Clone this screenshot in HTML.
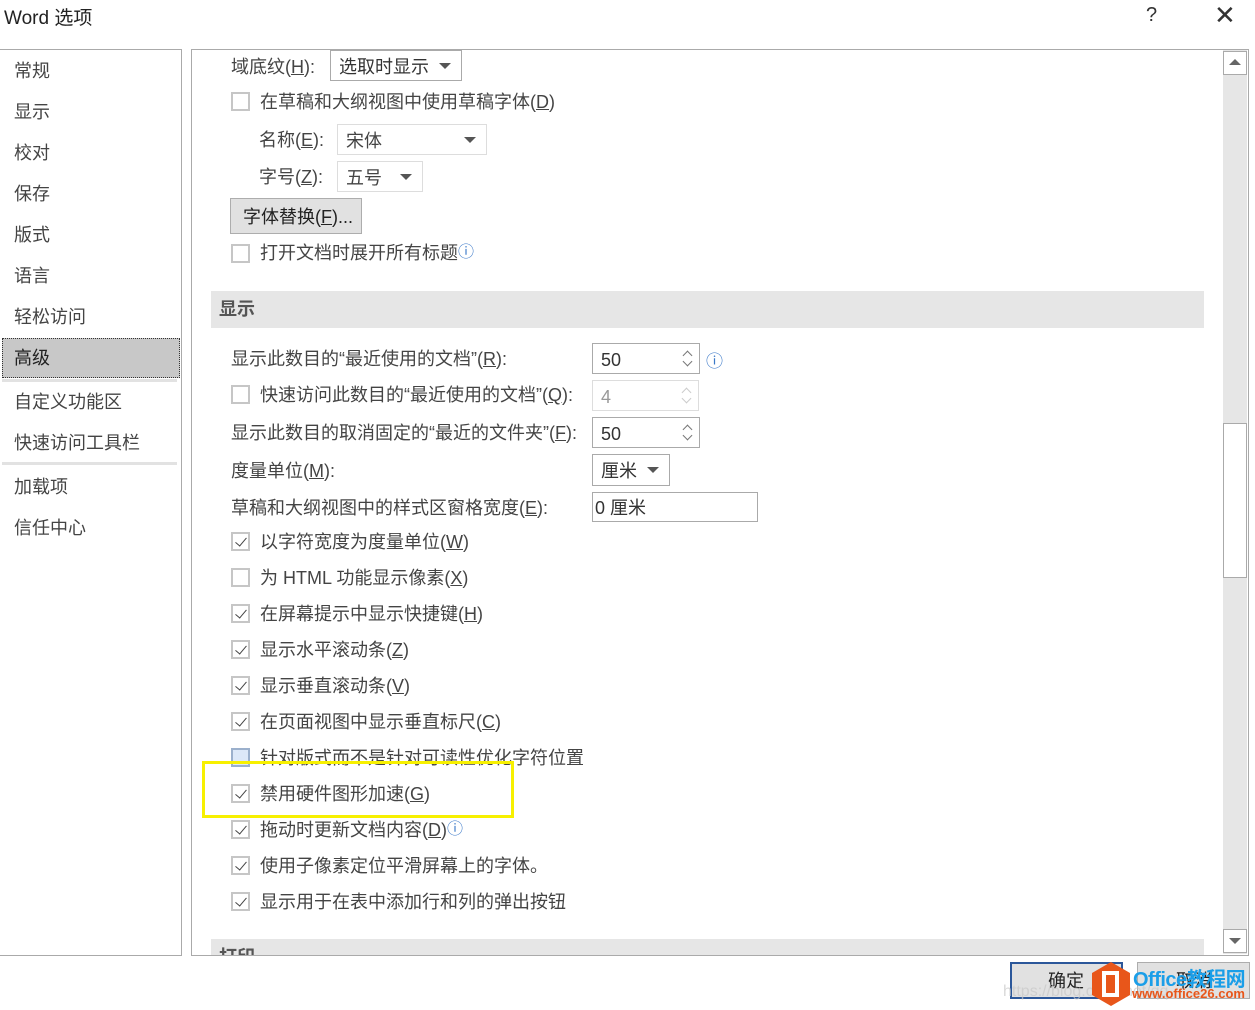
<!DOCTYPE html>
<html><head><meta charset="utf-8"><style>
*{margin:0;padding:0;box-sizing:border-box}
body{width:1255px;height:1010px;background:#fff;position:relative;overflow:hidden;font-family:"Liberation Sans","Microsoft YaHei","Noto Sans CJK SC",sans-serif;color:#444;font-size:18px}
.a{position:absolute;white-space:nowrap}
.t{line-height:24px;margin-top:1px}
.cb{position:absolute;width:19px;height:19px;border:2px solid #c6c6c6;background:#fff}
.cb.k::after{content:"";position:absolute;left:5px;top:1px;width:5px;height:10px;border:solid #444;border-width:0 1.5px 1.5px 0;transform:rotate(40deg)}
.box{position:absolute;border:1px solid #aaa;background:#fff}
.dd::after{content:"";position:absolute;right:10px;top:50%;margin-top:-3px;border:6px solid transparent;border-top:6px solid #555;border-bottom:0}
.up,.dn{position:absolute;right:8px;width:7px;height:7px;border:solid #777;border-width:1px 0 0 1px}
.up{top:8px;transform:rotate(45deg)}
.dn{top:14px;transform:rotate(225deg)}
.g .up,.g .dn{border-color:#ccc}
u{text-decoration:underline}
</style></head><body>
<div class="a" style="left:4px;top:3px;font-size:19px;color:#222">Word 选项</div>
<div class="a" style="left:1146px;top:4px;font-size:20px;color:#333">?</div>
<div class="a" style="left:1214px;top:0px;font-size:26px;color:#333;font-weight:300">✕</div>

<div class="a" style="left:0;top:49px;width:182px;height:907px;border:1px solid #aaa;border-left:none"></div>
<div class="a" style="left:2px;top:338px;width:178px;height:40px;background:#c8c8c8;border:1px dotted #333"></div>
<div class="a" style="left:2px;top:379px;width:175px;height:3px;background:#e2e2e2"></div>
<div class="a" style="left:2px;top:462px;width:175px;height:3px;background:#e2e2e2"></div>
<div class="a t" style="left:14px;top:58px">常规</div>
<div class="a t" style="left:14px;top:99px">显示</div>
<div class="a t" style="left:14px;top:140px">校对</div>
<div class="a t" style="left:14px;top:181px">保存</div>
<div class="a t" style="left:14px;top:222px">版式</div>
<div class="a t" style="left:14px;top:263px">语言</div>
<div class="a t" style="left:14px;top:304px">轻松访问</div>
<div class="a t" style="left:14px;top:345px;color:#222">高级</div>
<div class="a t" style="left:14px;top:389px">自定义功能区</div>
<div class="a t" style="left:14px;top:430px">快速访问工具栏</div>
<div class="a t" style="left:14px;top:474px">加载项</div>
<div class="a t" style="left:14px;top:515px">信任中心</div>

<div class="a" style="left:191px;top:49px;width:1058px;height:907px;border:1px solid #aaa"></div>
<div class="a" style="left:1223px;top:50px;width:24px;height:904px;background:#e6e6e6"></div>
<div class="a" style="left:1223px;top:51px;width:24px;height:24px;background:#fff;border:1px solid #aaa"></div>
<div class="a" style="left:1229px;top:59px;border:6px solid transparent;border-bottom:6px solid #666;border-top:0"></div>
<div class="a" style="left:1223px;top:423px;width:24px;height:155px;background:#fff;border:1px solid #aaa"></div>
<div class="a" style="left:1223px;top:929px;width:24px;height:24px;background:#fff;border:1px solid #aaa"></div>
<div class="a" style="left:1229px;top:938px;border:6px solid transparent;border-top:6px solid #666;border-bottom:0"></div>

<div class="a t" style="left:231px;top:54px">域底纹(<u>H</u>):</div>
<div class="box dd" style="left:330px;top:50px;width:132px;height:31px"><span class="a t" style="left:8px;top:3px;color:#333">选取时显示</span></div>
<div class="cb" style="left:231px;top:92px"></div><div class="a t" style="left:260px;top:89px">在草稿和大纲视图中使用草稿字体(<u>D</u>)</div>
<div class="a t" style="left:259px;top:127px">名称(<u>E</u>):</div>
<div class="box dd" style="left:337px;top:124px;width:150px;height:31px;border-color:#ddd"><span class="a t" style="left:8px;top:3px">宋体</span></div>
<div class="a t" style="left:259px;top:164px">字号(<u>Z</u>):</div>
<div class="box dd" style="left:337px;top:161px;width:86px;height:31px;border-color:#ddd"><span class="a t" style="left:8px;top:3px">五号</span></div>
<div class="a" style="left:230px;top:198px;width:132px;height:36px;background:#e1e1e1;border:1px solid #adadad"></div>
<div class="a t" style="left:243px;top:204px;color:#222">字体替换(<u>F</u>)...</div>
<div class="cb" style="left:231px;top:244px"></div><div class="a t" style="left:260px;top:240px">打开文档时展开所有标题<span style="color:#3a78c8;font-size:16px;vertical-align:top">ⓘ</span></div>

<div class="a" style="left:211px;top:291px;width:993px;height:37px;background:#e6e6e6"></div>
<div class="a t" style="left:219px;top:296px;font-weight:bold;color:#555">显示</div>

<div class="a t" style="left:231px;top:346px">显示此数目的“最近使用的文档”(<u>R</u>):</div>
<div class="box" style="left:592px;top:343px;width:108px;height:31px"><span class="a t" style="left:8px;top:3px;color:#333">50</span><i class="up"></i><i class="dn"></i></div>
<div class="a" style="left:706px;top:347px;color:#3a78c8;font-size:17px">ⓘ</div>
<div class="cb" style="left:231px;top:385px"></div><div class="a t" style="left:260px;top:382px">快速访问此数目的“最近使用的文档”(<u>Q</u>):</div>
<div class="box g" style="left:592px;top:380px;width:107px;height:31px;border-color:#ddd"><span class="a t" style="left:8px;top:3px;color:#999">4</span><i class="up"></i><i class="dn"></i></div>
<div class="a t" style="left:231px;top:420px">显示此数目的取消固定的“最近的文件夹”(<u>F</u>):</div>
<div class="box" style="left:592px;top:417px;width:108px;height:31px"><span class="a t" style="left:8px;top:3px;color:#333">50</span><i class="up"></i><i class="dn"></i></div>
<div class="a t" style="left:231px;top:458px">度量单位(<u>M</u>):</div>
<div class="box dd" style="left:592px;top:454px;width:78px;height:32px"><span class="a t" style="left:8px;top:3px;color:#333">厘米</span></div>
<div class="a t" style="left:231px;top:495px">草稿和大纲视图中的样式区窗格宽度(<u>E</u>):</div>
<div class="box" style="left:592px;top:492px;width:166px;height:30px"><span class="a t" style="left:2px;top:2px;color:#333">0 厘米</span></div>

<div class="cb k" style="left:231px;top:532px"></div><div class="a t" style="left:260px;top:529px">以字符宽度为度量单位(<u>W</u>)</div>
<div class="cb" style="left:231px;top:568px"></div><div class="a t" style="left:260px;top:565px">为 HTML 功能显示像素(<u>X</u>)</div>
<div class="cb k" style="left:231px;top:604px"></div><div class="a t" style="left:260px;top:601px">在屏幕提示中显示快捷键(<u>H</u>)</div>
<div class="cb k" style="left:231px;top:640px"></div><div class="a t" style="left:260px;top:637px">显示水平滚动条(<u>Z</u>)</div>
<div class="cb k" style="left:231px;top:676px"></div><div class="a t" style="left:260px;top:673px">显示垂直滚动条(<u>V</u>)</div>
<div class="cb k" style="left:231px;top:712px"></div><div class="a t" style="left:260px;top:709px">在页面视图中显示垂直标尺(<u>C</u>)</div>
<div class="cb" style="left:231px;top:748px;background:#dce8f8;border-color:#9bb0cc"></div><div class="a t" style="left:260px;top:745px">针对版式而不是针对可读性优化字符位置</div>
<div class="cb k" style="left:231px;top:784px"></div><div class="a t" style="left:260px;top:781px">禁用硬件图形加速(<u>G</u>)</div>
<div class="cb k" style="left:231px;top:820px"></div><div class="a t" style="left:260px;top:817px">拖动时更新文档内容(<u>D</u>)<span style="color:#3a78c8;font-size:16px;vertical-align:top">ⓘ</span></div>
<div class="cb k" style="left:231px;top:856px"></div><div class="a t" style="left:260px;top:853px">使用子像素定位平滑屏幕上的字体。</div>
<div class="cb k" style="left:231px;top:892px"></div><div class="a t" style="left:260px;top:889px">显示用于在表中添加行和列的弹出按钮</div>
<div class="a" style="left:202px;top:761px;width:312px;height:57px;border:3px solid #f7f000"></div>

<div class="a" style="left:211px;top:939px;width:993px;height:16px;background:#e6e6e6;overflow:hidden"><span class="a" style="left:8px;top:4px;font-weight:bold;color:#555">打印</span></div>

<div class="a" style="left:1010px;top:962px;width:113px;height:37px;background:#e1e1e1;border:2px solid #2b579a"></div>
<div class="a t" style="left:1048px;top:968px;color:#222">确定</div>
<div class="a" style="left:1137px;top:962px;width:113px;height:37px;background:#e1e1e1;border:1px solid #adadad"></div>
<div class="a t" style="left:1176px;top:968px;color:#222">取消</div>
<div class="a" style="left:1003px;top:983px;color:rgba(200,200,200,.7);font-size:16px">https://blog.csdn.net/qq_</div>
<svg class="a" style="left:1090px;top:961px" width="42" height="46" viewBox="0 0 42 46"><polygon points="21,1 40,12 40,34 21,45 2,34 2,12" fill="#e8561a"/><rect x="14" y="12" width="13" height="22" fill="none" stroke="#fff" stroke-width="4"/></svg>
<div class="a" style="left:1133px;top:963px;font-size:20px;font-weight:bold;color:#1a9ee8;letter-spacing:-0.5px">Office教程网</div>
<div class="a" style="left:1132px;top:986px;font-size:13px;font-weight:bold;color:#e8561a">www.office26.com</div>
</body></html>
